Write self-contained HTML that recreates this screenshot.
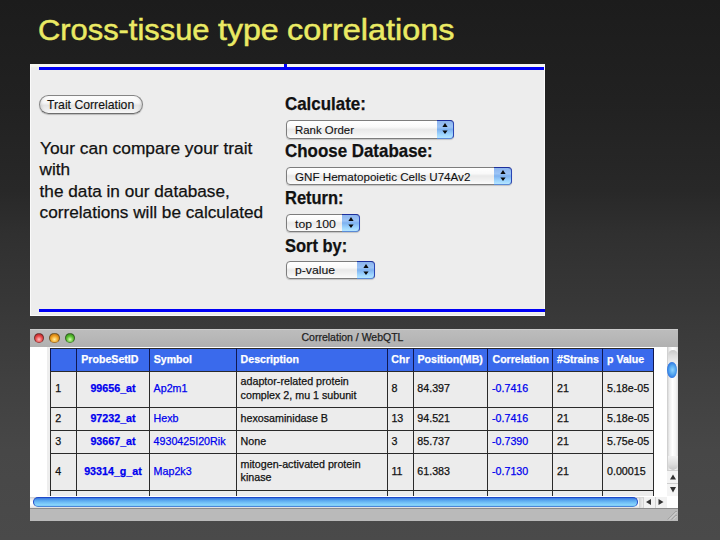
<!DOCTYPE html>
<html><head><meta charset="utf-8"><style>
html,body{margin:0;padding:0;}
body{width:720px;height:540px;overflow:hidden;position:relative;font-family:"Liberation Sans", sans-serif;-webkit-text-stroke:0.25px;background:linear-gradient(#1c1c1c 0px,#212121 100px,#282828 190px,#303030 235px,#373737 300px,#404040 380px,#474747 450px,#4a4a4a 540px);}
</style></head><body>
<div style="position:absolute;left:38.300000000000004px;top:14.50px;font-size:30px;line-height:30px;white-space:nowrap;transform-origin:0 0;transform:scaleX(1.0288);color:#eaea64;-webkit-text-stroke:0.5px #eaea64;">Cross-tissue</div>
<div style="position:absolute;left:218.29999999999998px;top:14.50px;font-size:30px;line-height:30px;white-space:nowrap;transform-origin:0 0;transform:scaleX(1.0702);color:#eaea64;-webkit-text-stroke:0.5px #eaea64;">type</div>
<div style="position:absolute;left:286.59999999999997px;top:14.50px;font-size:30px;line-height:30px;white-space:nowrap;transform-origin:0 0;transform:scaleX(1.0795);color:#eaea64;-webkit-text-stroke:0.5px #eaea64;">correlations</div>
<div style="position:absolute;left:30px;top:64px;width:515px;height:252px;background:#ededed;"></div>
<div style="position:absolute;left:30px;top:64px;width:515px;height:3px;background:#f7f7f0;"></div>
<div style="position:absolute;left:39px;top:67px;width:506px;height:2.5px;background:#0000f5;"></div>
<div style="position:absolute;left:284px;top:64px;width:3px;height:5px;background:#0000f5;"></div>
<div style="position:absolute;left:30px;top:64px;width:1px;height:252px;background:#fafafa;"></div>
<div style="position:absolute;left:544px;top:64px;width:1px;height:252px;background:#fafafa;"></div>
<div style="position:absolute;left:39px;top:309px;width:506px;height:3px;background:#0000f5;"></div>
<div style="position:absolute;left:39px;top:312px;width:506px;height:1px;background:#f4f4ea;"></div>
<div style="position:absolute;left:30px;top:315px;width:515px;height:1px;background:#fbfbfb;"></div>
<div style="position:absolute;left:39px;top:95px;width:104px;height:19px;box-sizing:border-box;border:1px solid #858585;border-bottom-color:#6e6e6e;border-radius:10px;background:linear-gradient(#fdfdfd 0%,#f6f6f6 40%,#e4e4e4 55%,#f0f0f0 85%,#fafafa 100%);box-shadow:0 1px 1px rgba(0,0,0,.22), inset 3px 0 3px -2px rgba(0,0,0,.12), inset -3px 0 3px -2px rgba(0,0,0,.12);"></div>
<div style="position:absolute;left:47px;top:99.27px;font-size:12.2px;line-height:12.2px;white-space:nowrap;transform-origin:0 0;transform:scaleX(1.0032);color:#111;-webkit-text-stroke:0.12px;">Trait Correlation</div>
<div style="position:absolute;left:39.6px;top:139.94px;font-size:17.2px;line-height:17.2px;white-space:nowrap;transform-origin:0 0;transform:scaleX(1.0086);color:#111;">Your can compare your trait</div>
<div style="position:absolute;left:39.6px;top:161.44px;font-size:17.2px;line-height:17.2px;white-space:nowrap;color:#111;">with</div>
<div style="position:absolute;left:39.6px;top:182.84px;font-size:17.2px;line-height:17.2px;white-space:nowrap;color:#111;">the data in our database,</div>
<div style="position:absolute;left:39.6px;top:204.44px;font-size:17.2px;line-height:17.2px;white-space:nowrap;color:#111;">correlations will be calculated</div>
<div style="position:absolute;left:284.8px;top:96.13px;font-size:17.8px;line-height:17.8px;white-space:nowrap;transform-origin:0 0;transform:scaleX(0.9508);font-weight:bold;color:#111;">Calculate:</div>
<div style="position:absolute;left:284.8px;top:142.93px;font-size:17.8px;line-height:17.8px;white-space:nowrap;transform-origin:0 0;transform:scaleX(0.9514);font-weight:bold;color:#111;">Choose Database:</div>
<div style="position:absolute;left:284.8px;top:190.43px;font-size:17.8px;line-height:17.8px;white-space:nowrap;transform-origin:0 0;transform:scaleX(0.9269);font-weight:bold;color:#111;">Return:</div>
<div style="position:absolute;left:284.8px;top:237.73px;font-size:17.8px;line-height:17.8px;white-space:nowrap;transform-origin:0 0;transform:scaleX(0.9258);font-weight:bold;color:#111;">Sort by:</div>
<div style="position:absolute;left:286px;top:120px;width:168px;height:18.5px;box-sizing:border-box;border:1px solid #7d7d7d;border-radius:4px;background:linear-gradient(#ffffff 0%,#f9f9f9 35%,#e9e9e9 50%,#f1f1f1 75%,#fbfbfb 100%);box-shadow:0 1px 1px rgba(0,0,0,.18);"></div>
<div style="position:absolute;left:436.5px;top:120px;width:17.5px;height:18.5px;box-sizing:border-box;border-top:1px solid #1d2f9c;border-right:1px solid #2a45b4;border-bottom:1px solid #5a8ad6;border-radius:0 4px 4px 0;background:linear-gradient(#8cb4ee 0%,#9cc4f6 35%,#7fb2f0 50%,#9ed6ff 80%,#b6e6ff 100%);"></div>
<svg style="position:absolute;left:441.25px;top:122.25px" width="8" height="14" viewBox="0 0 8 14"><path d="M4 0.9 L6.6 4.9 L1.4 4.9 Z M4 12.1 L6.6 8.4 L1.4 8.4 Z" fill="#0a0a0a"/></svg>
<div style="position:absolute;left:294.5px;top:124.57px;font-size:11.5px;line-height:11.5px;white-space:nowrap;transform-origin:0 0;transform:scaleX(0.9926);color:#111;-webkit-text-stroke:0.1px;">Rank Order</div>
<div style="position:absolute;left:286px;top:167.2px;width:225.7px;height:18.100000000000023px;box-sizing:border-box;border:1px solid #7d7d7d;border-radius:4px;background:linear-gradient(#ffffff 0%,#f9f9f9 35%,#e9e9e9 50%,#f1f1f1 75%,#fbfbfb 100%);box-shadow:0 1px 1px rgba(0,0,0,.18);"></div>
<div style="position:absolute;left:494px;top:167.2px;width:17.69999999999999px;height:18.100000000000023px;box-sizing:border-box;border-top:1px solid #1d2f9c;border-right:1px solid #2a45b4;border-bottom:1px solid #5a8ad6;border-radius:0 4px 4px 0;background:linear-gradient(#8cb4ee 0%,#9cc4f6 35%,#7fb2f0 50%,#9ed6ff 80%,#b6e6ff 100%);"></div>
<svg style="position:absolute;left:498.85px;top:169.25px" width="8" height="14" viewBox="0 0 8 14"><path d="M4 0.9 L6.6 4.9 L1.4 4.9 Z M4 12.1 L6.6 8.4 L1.4 8.4 Z" fill="#0a0a0a"/></svg>
<div style="position:absolute;left:294.5px;top:171.77px;font-size:11.5px;line-height:11.5px;white-space:nowrap;transform-origin:0 0;transform:scaleX(1.0101);color:#111;-webkit-text-stroke:0.1px;">GNF Hematopoietic Cells U74Av2</div>
<div style="position:absolute;left:286px;top:214.3px;width:73.5px;height:17.899999999999977px;box-sizing:border-box;border:1px solid #7d7d7d;border-radius:4px;background:linear-gradient(#ffffff 0%,#f9f9f9 35%,#e9e9e9 50%,#f1f1f1 75%,#fbfbfb 100%);box-shadow:0 1px 1px rgba(0,0,0,.18);"></div>
<div style="position:absolute;left:342px;top:214.3px;width:17.5px;height:17.899999999999977px;box-sizing:border-box;border-top:1px solid #1d2f9c;border-right:1px solid #2a45b4;border-bottom:1px solid #5a8ad6;border-radius:0 4px 4px 0;background:linear-gradient(#8cb4ee 0%,#9cc4f6 35%,#7fb2f0 50%,#9ed6ff 80%,#b6e6ff 100%);"></div>
<svg style="position:absolute;left:346.75px;top:216.25px" width="8" height="14" viewBox="0 0 8 14"><path d="M4 0.9 L6.6 4.9 L1.4 4.9 Z M4 12.1 L6.6 8.4 L1.4 8.4 Z" fill="#0a0a0a"/></svg>
<div style="position:absolute;left:294.5px;top:218.87px;font-size:11.5px;line-height:11.5px;white-space:nowrap;transform-origin:0 0;transform:scaleX(1.0632);color:#111;-webkit-text-stroke:0.1px;">top 100</div>
<div style="position:absolute;left:286px;top:261px;width:88.69999999999999px;height:18.399999999999977px;box-sizing:border-box;border:1px solid #7d7d7d;border-radius:4px;background:linear-gradient(#ffffff 0%,#f9f9f9 35%,#e9e9e9 50%,#f1f1f1 75%,#fbfbfb 100%);box-shadow:0 1px 1px rgba(0,0,0,.18);"></div>
<div style="position:absolute;left:357.3px;top:261px;width:17.399999999999977px;height:18.399999999999977px;box-sizing:border-box;border-top:1px solid #1d2f9c;border-right:1px solid #2a45b4;border-bottom:1px solid #5a8ad6;border-radius:0 4px 4px 0;background:linear-gradient(#8cb4ee 0%,#9cc4f6 35%,#7fb2f0 50%,#9ed6ff 80%,#b6e6ff 100%);"></div>
<svg style="position:absolute;left:362.00px;top:263.20px" width="8" height="14" viewBox="0 0 8 14"><path d="M4 0.9 L6.6 4.9 L1.4 4.9 Z M4 12.1 L6.6 8.4 L1.4 8.4 Z" fill="#0a0a0a"/></svg>
<div style="position:absolute;left:294.5px;top:265.47px;font-size:11.5px;line-height:11.5px;white-space:nowrap;transform-origin:0 0;transform:scaleX(1.0605);color:#111;-webkit-text-stroke:0.1px;">p-value</div>
<div style="position:absolute;left:30px;top:329px;width:648px;height:192px;background:#ffffff;"></div>
<div style="position:absolute;left:30px;top:329px;width:648px;height:17.5px;background:linear-gradient(#d4d4d4 0%,#bcbcbc 8%,#b6b6b6 60%,#b0b0b0 100%);"></div>
<div style="position:absolute;left:33.60px;top:332.5px;width:10.6px;height:10.6px;border-radius:50%;box-sizing:border-box;border:0.8px solid rgba(40,40,40,.6);border-bottom-color:rgba(90,90,90,.35);background:radial-gradient(circle at 50% 68%,#ffc0c0 0%,#e84848 50%,#9c1414 100%);"></div>
<div style="position:absolute;left:49.10px;top:332.5px;width:10.6px;height:10.6px;border-radius:50%;box-sizing:border-box;border:0.8px solid rgba(40,40,40,.6);border-bottom-color:rgba(90,90,90,.35);background:radial-gradient(circle at 50% 68%,#fff0a0 0%,#f0a020 50%,#a86008 100%);"></div>
<div style="position:absolute;left:64.70px;top:332.5px;width:10.6px;height:10.6px;border-radius:50%;box-sizing:border-box;border:0.8px solid rgba(40,40,40,.6);border-bottom-color:rgba(90,90,90,.35);background:radial-gradient(circle at 50% 68%,#d8ffb0 0%,#58c030 50%,#2a7a10 100%);"></div>
<div style="position:absolute;left:202.5px;width:300px;text-align:center;top:332.31px;font-size:10.5px;line-height:10.5px;white-space:nowrap;color:#222;">Correlation / WebQTL</div>
<div style="position:absolute;left:47px;top:347px;width:3px;height:149px;background:#eeeeee;"></div>
<div style="position:absolute;left:50px;top:348.3px;width:604px;height:148px;background:#ececec;"></div>
<div style="position:absolute;left:50px;top:348.3px;width:604px;height:22.7px;background:#3a6aec;"></div>
<div style="position:absolute;left:50px;top:347.8px;width:604px;height:1px;background:#2a2a2a;"></div>
<div style="position:absolute;left:50px;top:370.5px;width:604px;height:1px;background:#2a2a2a;"></div>
<div style="position:absolute;left:50px;top:406.8px;width:604px;height:1px;background:#2a2a2a;"></div>
<div style="position:absolute;left:50px;top:429.7px;width:604px;height:1px;background:#2a2a2a;"></div>
<div style="position:absolute;left:50px;top:452.8px;width:604px;height:1px;background:#2a2a2a;"></div>
<div style="position:absolute;left:50px;top:489.5px;width:604px;height:1px;background:#2a2a2a;"></div>
<div style="position:absolute;left:49.5px;top:371px;width:1px;height:125px;background:#2a2a2a;"></div>
<div style="position:absolute;left:49.5px;top:348.3px;width:1px;height:22.7px;background:#101850;"></div>
<div style="position:absolute;left:76.0px;top:371px;width:1px;height:125px;background:#2a2a2a;"></div>
<div style="position:absolute;left:76.0px;top:348.3px;width:1px;height:22.7px;background:#101850;"></div>
<div style="position:absolute;left:149.0px;top:371px;width:1px;height:125px;background:#2a2a2a;"></div>
<div style="position:absolute;left:149.0px;top:348.3px;width:1px;height:22.7px;background:#101850;"></div>
<div style="position:absolute;left:236.0px;top:371px;width:1px;height:125px;background:#2a2a2a;"></div>
<div style="position:absolute;left:236.0px;top:348.3px;width:1px;height:22.7px;background:#101850;"></div>
<div style="position:absolute;left:386.5px;top:371px;width:1px;height:125px;background:#2a2a2a;"></div>
<div style="position:absolute;left:386.5px;top:348.3px;width:1px;height:22.7px;background:#101850;"></div>
<div style="position:absolute;left:412.5px;top:371px;width:1px;height:125px;background:#2a2a2a;"></div>
<div style="position:absolute;left:412.5px;top:348.3px;width:1px;height:22.7px;background:#101850;"></div>
<div style="position:absolute;left:487.0px;top:371px;width:1px;height:125px;background:#2a2a2a;"></div>
<div style="position:absolute;left:487.0px;top:348.3px;width:1px;height:22.7px;background:#101850;"></div>
<div style="position:absolute;left:552.0px;top:371px;width:1px;height:125px;background:#2a2a2a;"></div>
<div style="position:absolute;left:552.0px;top:348.3px;width:1px;height:22.7px;background:#101850;"></div>
<div style="position:absolute;left:602.0px;top:371px;width:1px;height:125px;background:#2a2a2a;"></div>
<div style="position:absolute;left:602.0px;top:348.3px;width:1px;height:22.7px;background:#101850;"></div>
<div style="position:absolute;left:653.3px;top:371px;width:1px;height:125px;background:#2a2a2a;"></div>
<div style="position:absolute;left:653.3px;top:348.3px;width:1px;height:22.7px;background:#101850;"></div>
<div style="position:absolute;left:81.3px;top:353.83px;font-size:10.6px;line-height:10.6px;white-space:nowrap;font-weight:bold;color:#fff;">ProbeSetID</div>
<div style="position:absolute;left:153.7px;top:353.83px;font-size:10.6px;line-height:10.6px;white-space:nowrap;font-weight:bold;color:#fff;">Symbol</div>
<div style="position:absolute;left:240.6px;top:353.83px;font-size:10.6px;line-height:10.6px;white-space:nowrap;font-weight:bold;color:#fff;">Description</div>
<div style="position:absolute;left:391.3px;top:353.83px;font-size:10.6px;line-height:10.6px;white-space:nowrap;font-weight:bold;color:#fff;">Chr</div>
<div style="position:absolute;left:417.5px;top:353.83px;font-size:10.6px;line-height:10.6px;white-space:nowrap;font-weight:bold;color:#fff;">Position(MB)</div>
<div style="position:absolute;left:492.5px;top:353.83px;font-size:10.6px;line-height:10.6px;white-space:nowrap;font-weight:bold;color:#fff;">Correlation</div>
<div style="position:absolute;left:557px;top:353.83px;font-size:10.6px;line-height:10.6px;white-space:nowrap;font-weight:bold;color:#fff;">#Strains</div>
<div style="position:absolute;left:607px;top:353.83px;font-size:10.6px;line-height:10.6px;white-space:nowrap;font-weight:bold;color:#fff;">p Value</div>
<div style="position:absolute;left:55.3px;top:383.09px;font-size:10.7px;line-height:10.7px;white-space:nowrap;color:#111;">1</div>
<div style="position:absolute;left:-37.0px;width:300px;text-align:center;top:383.09px;font-size:10.7px;line-height:10.7px;white-space:nowrap;font-weight:bold;color:#0000ee;">99656_at</div>
<div style="position:absolute;left:153.6px;top:383.09px;font-size:10.7px;line-height:10.7px;white-space:nowrap;color:#0000ee;">Ap2m1</div>
<div style="position:absolute;left:240.6px;top:376.19px;font-size:10.7px;line-height:10.7px;white-space:nowrap;color:#111;">adaptor-related protein</div>
<div style="position:absolute;left:240.6px;top:389.99px;font-size:10.7px;line-height:10.7px;white-space:nowrap;color:#111;">complex 2, mu 1 subunit</div>
<div style="position:absolute;left:391.4px;top:383.09px;font-size:10.7px;line-height:10.7px;white-space:nowrap;color:#111;">8</div>
<div style="position:absolute;left:417.3px;top:383.09px;font-size:10.7px;line-height:10.7px;white-space:nowrap;color:#111;">84.397</div>
<div style="position:absolute;left:492px;top:383.09px;font-size:10.7px;line-height:10.7px;white-space:nowrap;color:#0000ee;">-0.7416</div>
<div style="position:absolute;left:557px;top:383.09px;font-size:10.7px;line-height:10.7px;white-space:nowrap;color:#111;">21</div>
<div style="position:absolute;left:607px;top:383.09px;font-size:10.7px;line-height:10.7px;white-space:nowrap;color:#111;">5.18e-05</div>
<div style="position:absolute;left:55.3px;top:412.69px;font-size:10.7px;line-height:10.7px;white-space:nowrap;color:#111;">2</div>
<div style="position:absolute;left:-37.0px;width:300px;text-align:center;top:412.69px;font-size:10.7px;line-height:10.7px;white-space:nowrap;font-weight:bold;color:#0000ee;">97232_at</div>
<div style="position:absolute;left:153.6px;top:412.69px;font-size:10.7px;line-height:10.7px;white-space:nowrap;color:#0000ee;">Hexb</div>
<div style="position:absolute;left:240.6px;top:412.69px;font-size:10.7px;line-height:10.7px;white-space:nowrap;color:#111;">hexosaminidase B</div>
<div style="position:absolute;left:391.4px;top:412.69px;font-size:10.7px;line-height:10.7px;white-space:nowrap;color:#111;">13</div>
<div style="position:absolute;left:417.3px;top:412.69px;font-size:10.7px;line-height:10.7px;white-space:nowrap;color:#111;">94.521</div>
<div style="position:absolute;left:492px;top:412.69px;font-size:10.7px;line-height:10.7px;white-space:nowrap;color:#0000ee;">-0.7416</div>
<div style="position:absolute;left:557px;top:412.69px;font-size:10.7px;line-height:10.7px;white-space:nowrap;color:#111;">21</div>
<div style="position:absolute;left:607px;top:412.69px;font-size:10.7px;line-height:10.7px;white-space:nowrap;color:#111;">5.18e-05</div>
<div style="position:absolute;left:55.3px;top:435.69px;font-size:10.7px;line-height:10.7px;white-space:nowrap;color:#111;">3</div>
<div style="position:absolute;left:-37.0px;width:300px;text-align:center;top:435.69px;font-size:10.7px;line-height:10.7px;white-space:nowrap;font-weight:bold;color:#0000ee;">93667_at</div>
<div style="position:absolute;left:153.6px;top:435.69px;font-size:10.7px;line-height:10.7px;white-space:nowrap;color:#0000ee;">4930425I20Rik</div>
<div style="position:absolute;left:240.6px;top:435.69px;font-size:10.7px;line-height:10.7px;white-space:nowrap;color:#111;">None</div>
<div style="position:absolute;left:391.4px;top:435.69px;font-size:10.7px;line-height:10.7px;white-space:nowrap;color:#111;">3</div>
<div style="position:absolute;left:417.3px;top:435.69px;font-size:10.7px;line-height:10.7px;white-space:nowrap;color:#111;">85.737</div>
<div style="position:absolute;left:492px;top:435.69px;font-size:10.7px;line-height:10.7px;white-space:nowrap;color:#0000ee;">-0.7390</div>
<div style="position:absolute;left:557px;top:435.69px;font-size:10.7px;line-height:10.7px;white-space:nowrap;color:#111;">21</div>
<div style="position:absolute;left:607px;top:435.69px;font-size:10.7px;line-height:10.7px;white-space:nowrap;color:#111;">5.75e-05</div>
<div style="position:absolute;left:55.3px;top:465.59px;font-size:10.7px;line-height:10.7px;white-space:nowrap;color:#111;">4</div>
<div style="position:absolute;left:-37.0px;width:300px;text-align:center;top:465.59px;font-size:10.7px;line-height:10.7px;white-space:nowrap;font-weight:bold;color:#0000ee;">93314_g_at</div>
<div style="position:absolute;left:153.6px;top:465.59px;font-size:10.7px;line-height:10.7px;white-space:nowrap;color:#0000ee;">Map2k3</div>
<div style="position:absolute;left:240.6px;top:458.69px;font-size:10.7px;line-height:10.7px;white-space:nowrap;color:#111;">mitogen-activated protein</div>
<div style="position:absolute;left:240.6px;top:472.49px;font-size:10.7px;line-height:10.7px;white-space:nowrap;color:#111;">kinase</div>
<div style="position:absolute;left:391.4px;top:465.59px;font-size:10.7px;line-height:10.7px;white-space:nowrap;color:#111;">11</div>
<div style="position:absolute;left:417.3px;top:465.59px;font-size:10.7px;line-height:10.7px;white-space:nowrap;color:#111;">61.383</div>
<div style="position:absolute;left:492px;top:465.59px;font-size:10.7px;line-height:10.7px;white-space:nowrap;color:#0000ee;">-0.7130</div>
<div style="position:absolute;left:557px;top:465.59px;font-size:10.7px;line-height:10.7px;white-space:nowrap;color:#111;">21</div>
<div style="position:absolute;left:607px;top:465.59px;font-size:10.7px;line-height:10.7px;white-space:nowrap;color:#111;">0.00015</div>
<div style="position:absolute;left:654.3px;top:347px;width:13px;height:149px;background:#ffffff;"></div>
<div style="position:absolute;left:667px;top:347px;width:11px;height:149px;background:linear-gradient(90deg,#c9c9c9 0%,#ececec 20%,#ffffff 50%,#f4f4f4 80%,#dedede 100%);"></div>
<div style="position:absolute;left:667.5px;top:350px;width:10px;height:14px;border-radius:5px 5px 0 0;background:linear-gradient(#c8c8c8 0%,#dcdcdc 40%,#efefef 100%);"></div>
<div style="position:absolute;left:667.3px;top:361.6px;width:10.2px;height:16.6px;border-radius:50%;background:radial-gradient(ellipse at 55% 50%,#8fd4ff 0%,#55a8f0 40%,#2a6ee0 75%,#1440c0 100%);"></div>
<div style="position:absolute;left:667.5px;top:456px;width:10px;height:14px;border-radius:0 0 5px 5px;background:linear-gradient(#f2f2f2 0%,#dedede 60%,#c6c6c6 100%);"></div>
<div style="position:absolute;left:667px;top:470px;width:11px;height:13px;background:#f4f4f4;border-top:1px solid #cfcfcf;box-sizing:border-box;"></div>
<div style="position:absolute;left:667px;top:483px;width:11px;height:13px;background:#f4f4f4;border-top:1px solid #cfcfcf;box-sizing:border-box;"></div>
<svg style="position:absolute;left:668px;top:471px" width="10" height="24" viewBox="0 0 10 24"><path d="M5 3.5 L8 8.5 L2 8.5 Z M5 21.5 L8 16 L2 16 Z" fill="#333"/></svg>
<div style="position:absolute;left:30px;top:496.5px;width:636px;height:11px;background:linear-gradient(#cfcfcf 0%,#ececec 20%,#ffffff 50%,#f4f4f4 80%,#dedede 100%);"></div>
<div style="position:absolute;left:32.8px;top:496.5px;width:605.5px;height:10.8px;box-sizing:border-box;border:1px solid #1d48c8;border-bottom-color:#4a86d8;border-radius:5.4px;background:linear-gradient(#3a78e0 0%,#58a6ee 30%,#70bef6 55%,#86d4fc 85%,#7cc8f4 100%);"></div>
<div style="position:absolute;left:638.5px;top:496.5px;width:4px;height:11px;background:linear-gradient(90deg,#cfcfcf,#efefef);border-radius:0 5px 5px 0;"></div>
<div style="position:absolute;left:642.5px;top:496.5px;width:12px;height:11px;background:#f2f2f2;border-left:1px solid #d4d4d4;box-sizing:border-box;"></div>
<div style="position:absolute;left:654.5px;top:496.5px;width:12px;height:11px;background:#f2f2f2;border-left:1px solid #d4d4d4;box-sizing:border-box;"></div>
<svg style="position:absolute;left:643px;top:497px" width="24" height="10" viewBox="0 0 24 10"><path d="M3 5 L8 2 L8 8 Z M20.5 5 L15.5 2 L15.5 8 Z" fill="#333"/></svg>
<div style="position:absolute;left:666.5px;top:496.5px;width:11.5px;height:11px;background:#ffffff;"></div>
<div style="position:absolute;left:30px;top:507.5px;width:648px;height:13.5px;background:#bababa;border-top:1px solid #8c8c8c;box-sizing:border-box;"></div>
<svg style="position:absolute;left:666px;top:509px" width="11" height="11" viewBox="0 0 11 11"><path d="M10.5 2 L2 10.5 M10.5 6 L6 10.5" stroke="#8a8a8a" stroke-width="1"/><path d="M10.5 3 L3 10.5 M10.5 7 L7 10.5" stroke="#dddddd" stroke-width="1"/></svg>
</body></html>
